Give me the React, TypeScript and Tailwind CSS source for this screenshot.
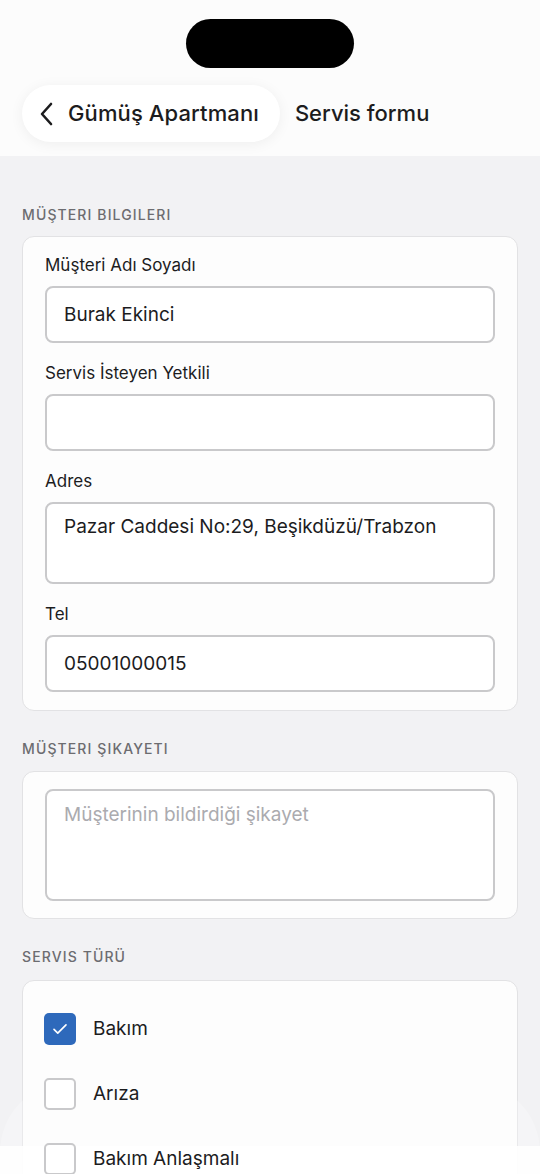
import React from "react";

const font = { fontFamily: "Inter, 'Noto Sans', sans-serif" };

function Field({ label, value, placeholder, tall }: { label: string; value?: string; placeholder?: string; tall?: boolean }) {
  return (
    <div className="flex flex-col gap-[10px]">
      <div className="text-[17px] leading-[22px] text-[#1c1c1e]">{label}</div>
      <div
        className={`rounded-[8px] border-2 border-[#c9c9cb] bg-white px-[17px] ${tall ? "h-[82px] pt-[10px]" : "h-[57px] flex items-center"}`}
      >
        <span className="text-[19px] leading-[26px] text-[#1c1c1e]">{value}</span>
        {placeholder && <span className="text-[19px] text-[#ababaf]">{placeholder}</span>}
      </div>
    </div>
  );
}

function SectionLabel({ children }: { children: React.ReactNode }) {
  return <div className="px-[22px] text-[14px] leading-[18px] tracking-[0.08em] font-medium text-[#6c6c70]">{children}</div>;
}

function Check({ checked, label }: { checked?: boolean; label: string }) {
  return (
    <div className="relative z-20 flex items-center gap-[17px] h-[32px]">
      {checked ? (
        <div className="w-[32px] h-[32px] rounded-[5px] bg-[#2e69bb] flex items-center justify-center">
          <svg width="18" height="18" viewBox="0 0 24 24" fill="none" stroke="white" strokeWidth="2.2" strokeLinecap="round" strokeLinejoin="round">
            <path d="M4 12.5l5 5L20 6.5" />
          </svg>
        </div>
      ) : (
        <div className="w-[32px] h-[32px] rounded-[5px] border-2 border-[#c9c9cb] bg-white" />
      )}
      <span className="text-[19px] text-[#1c1c1e]">{label}</span>
    </div>
  );
}

export default function App() {
  return (
    <div style={font} className="relative w-[540px] h-[1174px] overflow-hidden bg-[#f2f2f4]">
      <div className="bg-[#fcfcfc] h-[156px] flex flex-col">
        <div className="flex justify-center pt-[19px]">
          <div className="w-[168px] h-[49px] rounded-full bg-black" />
        </div>
        <div className="flex items-center mt-[17px] px-[22px] gap-[15px]">
          <div className="h-[57px] rounded-full bg-white shadow-[0_2px_14px_rgba(0,0,0,0.06)] flex items-center pl-[16px] pr-[21px] gap-[12px]">
            <svg width="18" height="26" viewBox="0 0 18 26" fill="none" stroke="#1c1c1e" strokeWidth="2.6" strokeLinecap="round" strokeLinejoin="round">
              <path d="M13 3L4 13l9 10" />
            </svg>
            <span className="text-[22px] font-medium text-[#1c1c1e] tracking-[0.005em]">Gümüş Apartmanı</span>
          </div>
          <span className="text-[22px] font-medium text-[#1c1c1e]">Servis formu</span>
        </div>
      </div>

      <div className="pt-[50px] flex flex-col">
        <SectionLabel>MÜŞTERI BILGILERI</SectionLabel>
        <div className="mx-[22px] mt-[12px] rounded-[12px] border border-[#e2e2e4] bg-[#fdfdfd] px-[22px] pt-[17px] pb-[18px] flex flex-col gap-[19px]">
          <Field label="Müşteri Adı Soyadı" value="Burak Ekinci" />
          <Field label="Servis İsteyen Yetkili" value="" />
          <Field label="Adres" value="Pazar Caddesi No:29, Beşikdüzü/Trabzon" tall />
          <Field label="Tel" value="05001000015" />
        </div>

        <div className="mt-[29px]">
          <SectionLabel>MÜŞTERI ŞIKAYETI</SectionLabel>
        </div>
        <div className="mx-[22px] mt-[13px] rounded-[12px] border border-[#e2e2e4] bg-[#fdfdfd] px-[22px] pt-[17px] pb-[17px]">
          <div className="h-[112px] rounded-[8px] border-2 border-[#c9c9cb] bg-white px-[17px] pt-[10px]">
            <span className="text-[19px] text-[#ababaf]">Müşterinin bildirdiği şikayet</span>
          </div>
        </div>

        <div className="mt-[29px]">
          <SectionLabel>SERVIS TÜRÜ</SectionLabel>
        </div>
        <div className="mx-[22px] mt-[14px] rounded-[12px] border border-[#e2e2e4] bg-[#fdfdfd] px-[21px] pt-[32px] pb-[30px] flex flex-col gap-[33px]">
          <Check checked label="Bakım" />
          <Check label="Arıza" />
          <Check label="Bakım Anlaşmalı" />
        </div>
      </div>

      <div className="absolute z-10 left-0 right-0 top-[1082px] bottom-0 rounded-t-[70px] bg-white/25" />
      <div className="absolute z-10 left-0 right-0 bottom-0 h-[28px] bg-white/90" />
    </div>
  );
}
